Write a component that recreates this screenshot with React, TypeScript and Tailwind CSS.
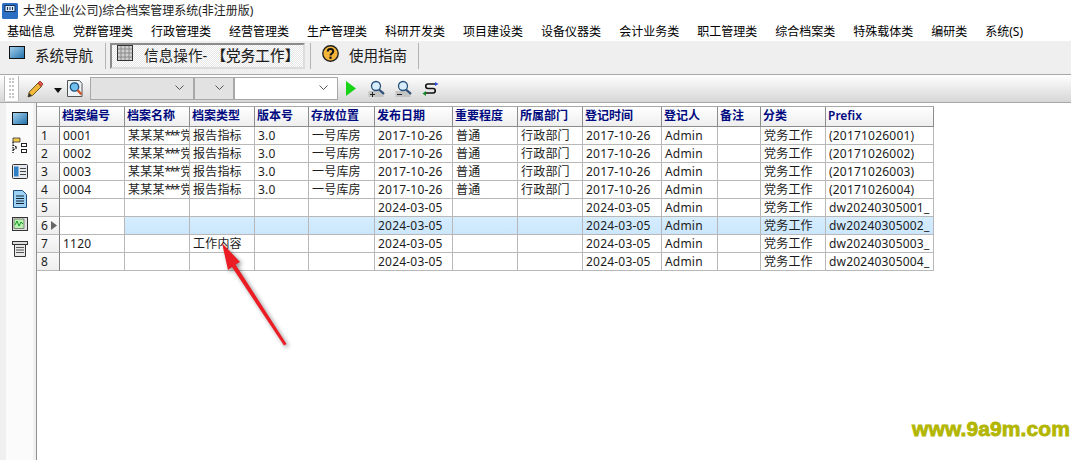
import React from "react";

const menus = ["基础信息","党群管理类","行政管理类","经营管理类","生产管理类","科研开发类","项目建设类","设备仪器类","会计业务类","职工管理类","综合档案类","特殊载体类","编研类","系统(S)"];
const headers = ["档案编号","档案名称","档案类型","版本号","存放位置","发布日期","重要程度","所属部门","登记时间","登记人","备注","分类","Prefix"];
const widths = "grid-cols-[23px_65px_65px_65px_54px_66px_78px_65px_65px_79px_56px_43px_65px_108px]";
const name = <>某某某<span className="tracking-[-2px]">***</span><span className="ml-[2px]">党</span></>;
const full = [name,"报告指标","3.0","一号库房"];
const rows: React.ReactNode[][] = [
  ["0001",...full,"2017-10-26","普通","行政部门","2017-10-26","Admin","","党务工作","(20171026001)"],
  ["0002",...full,"2017-10-26","普通","行政部门","2017-10-26","Admin","","党务工作","(20171026002)"],
  ["0003",...full,"2017-10-26","普通","行政部门","2017-10-26","Admin","","党务工作","(20171026003)"],
  ["0004",...full,"2017-10-26","普通","行政部门","2017-10-26","Admin","","党务工作","(20171026004)"],
  ["","","","","","2024-03-05","","","2024-03-05","Admin","","党务工作","dw20240305001_"],
  ["","","","","","2024-03-05","","","2024-03-05","Admin","","党务工作","dw20240305002_"],
  ["1120","","工作内容","","","2024-03-05","","","2024-03-05","Admin","","党务工作","dw20240305003_"],
  ["","","","","","2024-03-05","","","2024-03-05","Admin","","党务工作","dw20240305004_"],
];

function Monitor({ id }: { id: string }) {
  return (
    <svg className="block" width="16" height="13" viewBox="0 0 16 13">
      <defs>
        <linearGradient id={id} x1="0" y1="0" x2="1" y2="1">
          <stop offset="0" stopColor="#a8d4f0" />
          <stop offset="1" stopColor="#1f6ea8" />
        </linearGradient>
      </defs>
      <rect x="0.5" y="0.5" width="15" height="12" fill={`url(#${id})`} stroke="#111" />
    </svg>
  );
}
function Lens({ sign }: { sign: string }) {
  return <svg className="block" width="18" height="18" viewBox="0 0 18 18"><rect x="0.500" y="11" width="15" height="6" fill="#c4c4c4" /><circle cx="8" cy="6" r="4.500" fill="#d8ecfb" stroke="#25507a" strokeWidth="1.300" /><path d="M11 9.500l5 4.500" stroke="#2b4f78" strokeWidth="2.200" /><path d={sign === "+" ? "M2 14.500h5M4.500 12v5" : "M2 14.500h5"} stroke="#222" strokeWidth="1" /></svg>;
}
function Combo({ cls }: { cls: string }) {
  return <div className={`h-[23px] -mt-[1px] border border-[#a8a8a8] flex items-center justify-end pr-[9px] ${cls}`}><svg width="9" height="6" viewBox="0 0 9 6"><path d="M0.500 0.500l4 4 4-4" fill="none" stroke="#555" strokeWidth="1" /></svg></div>;
}

export default function App() {
  return (
    <div className="relative w-[1071px] h-[460px] overflow-hidden bg-white flex flex-col text-[12px] text-[#1c1c1c] font-['Noto_Sans','Noto_Sans_CJK_SC',sans-serif]">
      <div className="h-[22px] flex items-center pl-[2px] gap-[5px] shrink-0">
        <svg width="16" height="16" viewBox="0 0 16 16"><rect width="16" height="16" rx="1.500" fill="#2a6fc4" /><rect x="3" y="2.500" width="10" height="6" fill="#dbe9f8" stroke="#14315c" /><path d="M5.500 4v3M8 4v3M10.500 4v3" stroke="#14315c" /></svg>
        <span className="leading-none">大型企业(公司)综合档案管理系统(非注册版)</span>
      </div>
      <div className="h-[19px] flex items-center pl-[7px] gap-[18px] shrink-0 leading-none text-black">
        {menus.map((m) => <span key={m}>{m}</span>)}
      </div>
      <div className="h-[34px] bg-[#efefef] flex items-center pt-[2px] pb-[5px] shrink-0 text-[14.5px] leading-none border-b border-[#a8a8a8]">
        <div className="ml-[9px] w-[16px] -mt-[8px]"><Monitor id="navmon" /></div>
        <span className="ml-[10px] w-[58px] -mt-[2px] whitespace-nowrap">系统导航</span>
        <div className="ml-[12px] w-px h-[26px] bg-[#b4b4b4]" />
        <div className="ml-[4px] w-[195px] h-[26px] border-2 border-[#8a8a8a] border-b-[#dcdcdc] border-r-[#dcdcdc] flex items-center bg-[repeating-conic-gradient(#ffffff_0_25%,#e6e6e6_0_50%)] bg-[length:2px_2px]">
          <svg className="ml-[5px] -mt-[6px]" width="16" height="16" viewBox="0 0 16 16"><rect x="0.500" y="0.500" width="15" height="15" fill="#cfcfcf" stroke="#333" /><path d="M4 1v14M8 1v14M12 1v14M1 4h14M1 8h14M1 12h14" stroke="#8a8a8a" strokeWidth="1" /></svg>
          <span className="ml-[11px] -mt-[2px] whitespace-nowrap tracking-[0.15px]">信息操作-<span className="ml-[4px] [-webkit-text-stroke:0.2px_#1c1c1c]">【党务工作】</span></span>
        </div>
        <div className="ml-[5px] w-px h-[26px] bg-[#b4b4b4]" />
        <svg className="ml-[11px] -mt-[5px]" width="17" height="17" viewBox="0 0 17 17"><circle cx="8.500" cy="8.500" r="7.700" fill="#f5b53a" stroke="#222" strokeWidth="1.400" /><path d="M5.800 6.500c0-3.200 5.400-3.200 5.400 0 0 2-2.700 2-2.700 4" fill="none" stroke="#111" strokeWidth="2" /><rect x="7.400" y="11.600" width="2.200" height="2.200" fill="#111" /></svg>
        <span className="ml-[10px] w-[58px] -mt-[2px] whitespace-nowrap">使用指南</span>
        <div className="ml-[11px] w-px h-[26px] bg-[#b4b4b4]" />
      </div>
      <div className="h-[28px] shrink-0 flex items-center pl-[4px] border-b border-[#a8a8a8] bg-gradient-to-b from-white to-[#d6d6d6]">
        <div className="w-[15px] h-[25px] flex justify-center border-l border-r border-[#b8b8b8] bg-white">
          <div className="w-[5px] h-[20px] mt-[2px] border-l-2 border-r-2 border-dotted border-[#c8c8c8]" />
        </div>
        <svg className="ml-[8px]" width="17" height="18" viewBox="0 0 17 18"><path d="M1 17l1.200-5L11 3l3.500 3.500L5.500 15.500z" fill="#f1b93a" stroke="#5a4a1a" strokeWidth="0.900" /><path d="M11 3l2-2 3 3-2 2.500z" fill="#e2574a" stroke="#8a2a20" strokeWidth="0.800" /><path d="M1 17l1.200-4 2.800 2.800z" fill="#333" /></svg>
        <svg className="ml-[10px] mt-[4px]" width="8" height="5" viewBox="0 0 8 5"><path d="M0 0h8L4 5z" fill="#111" /></svg>
        <svg className="ml-[5px]" width="16" height="18" viewBox="0 0 16 18"><path d="M0.500 0.500h12l2.500 3v13h-14.500z" fill="#eef3f8" stroke="#555" /><circle cx="7.500" cy="7" r="4.200" fill="#6fc0ee" stroke="#1f4f7c" strokeWidth="1.300" /><path d="M10.500 10l4 4.500" stroke="#d2552a" strokeWidth="2.400" /></svg>
        <Combo cls="ml-[7px] w-[104px] bg-[#e2e2e2]" />
        <Combo cls="w-[40px] bg-[#e2e2e2]" />
        <Combo cls="w-[104px] bg-white" />
        <svg className="ml-[8px]" width="10" height="15" viewBox="0 0 10 15"><path d="M0 0l10 7.500L0 15z" fill="#18d418" /></svg>
        <div className="ml-[12px] h-[18px]"><Lens sign="+" /></div>
        <div className="ml-[9px] h-[18px]"><Lens sign="-" /></div>
        <svg className="ml-[9px]" width="17" height="16" viewBox="0 0 17 16"><path d="M14 3H6C3 3 3 7.500 6 7.500h5c3 0 3 4.500 0 4.500H3" fill="none" stroke="#111" strokeWidth="1.600" /><path d="M13 1l3.500 2L13 5z" fill="#2a4fe0" /><path d="M4 10v5L0.500 12.500z" fill="#168a2a" /></svg>
      </div>
      <div className="flex-1 flex min-h-0">
        <div className="w-[36px] shrink-0 bg-[#f0f0f0] pl-[6px] pr-[3px]">
          <div className="h-full bg-[#fbfbfb] flex flex-col items-center pt-[9px]">
            <div className="mb-[12px]"><Monitor id="sidemon" /></div>
            <svg className="block mb-[9px]" width="16" height="18" viewBox="0 0 16 18"><path d="M1 1h7v4H1z" fill="#f3c948" stroke="#333" strokeWidth="0.800" /><path d="M1 5v11M1 8l4 2.500-4 2.500" stroke="#111" strokeWidth="1.300" strokeDasharray="1.500 1" fill="none" /><rect x="9.500" y="6.500" width="5" height="3" fill="#fff" stroke="#222" /><rect x="9.500" y="12.500" width="5" height="3" fill="#fff" stroke="#222" /></svg>
            <svg className="block mb-[11px]" width="16" height="15" viewBox="0 0 16 15"><rect x="0.500" y="0.500" width="15" height="14" rx="1" fill="#e6e9ee" stroke="#333" /><rect x="2" y="2.500" width="4.500" height="10" fill="#2f7fc6" /><path d="M8 4.500h6M8 7.500h6M8 10.500h6" stroke="#444" /></svg>
            <svg className="block mb-[9px]" width="14" height="18" viewBox="0 0 14 18"><path d="M0.500 0.500h9l4 4v13h-13z" fill="#9dd2f5" stroke="#1c4d7c" /><path d="M3 6h8M3 8.500h8M3 11h8M3 13.500h8" stroke="#123" /></svg>
            <svg className="block mb-[10px]" width="16" height="14" viewBox="0 0 16 14"><rect x="0.500" y="0.500" width="15" height="13" fill="#e2e2e2" stroke="#333" /><rect x="2" y="2" width="10" height="9.500" fill="#b9f0b0" stroke="#444" strokeWidth="0.600" /><path d="M3 8l2-4 2 5 2-4 2 2" fill="none" stroke="#0a9a20" /></svg>
            <svg className="block" width="16" height="16" viewBox="0 0 16 16"><rect x="0.500" y="0.500" width="15" height="3" fill="#ddd" stroke="#333" /><path d="M2.500 3.500h11v12h-11z" fill="#e8e8e8" stroke="#333" /><path d="M4 6.500h8M4 9h8M4 11.500h8" stroke="#555" /></svg>
          </div>
        </div>
        <div className="flex-1 bg-white border-l border-[#909090] pt-[3px]">
          <div className={`grid w-[897px] border-t border-[#a8a8a8] ${widths}`}>
            <div className="h-[20px] bg-gradient-to-b from-white to-[#eeeeee] border-r border-b border-[#8c8c8c]" />
            {headers.map((h) => (
              <div key={h} className="h-[20px] pb-[2px] bg-gradient-to-b from-white to-[#eeeeee] border-r border-b border-[#8c8c8c] pl-[2px] flex items-center overflow-hidden whitespace-nowrap font-semibold text-[#000a80] leading-none">{h}</div>
            ))}
            {rows.map((r, i) => (
              <React.Fragment key={i}>
                <div className="h-[18px] bg-gradient-to-b from-[#fafafa] to-[#eeeeee] border-r border-b border-r-[#808080] border-b-[#b8b8b8] pl-[4px] flex items-center leading-none relative">
                  {i + 1}
                  {i === 5 && <svg className="absolute left-[14px] top-[4px]" width="6" height="9" viewBox="0 0 6 9"><path d="M0 0l6 4.500L0 9z" fill="#666" /></svg>}
                </div>
                {r.map((c, j) => (
                  <div key={j} className={`h-[18px] border-r border-b border-[#b8b8b8] pl-[3px] flex items-center overflow-hidden whitespace-nowrap leading-none tracking-[0.2px] ${i === 5 && j > 0 ? "bg-gradient-to-b from-[#d6edff] to-[#cbe6fc]" : "bg-white"}`}>{c}</div>
                ))}
              </React.Fragment>
            ))}
          </div>
        </div>
      </div>
      <svg className="absolute left-[215px] top-[238px] drop-shadow-[2px_2px_2px_rgba(0,0,0,0.45)]" width="80" height="112" viewBox="215 238 80 112">
        <path d="M222 243L240 262L235.500 264.500L286.500 344L284 345.500L232 267L228 270z" fill="#ec1c24" />
      </svg>
      <div className="absolute right-[1px] top-[417px] font-['Liberation_Sans',sans-serif] font-bold text-[21px] leading-[24px] tracking-[0.1px] [-webkit-text-stroke:0.8px_#b2b600] text-[#b2b600] whitespace-nowrap">www.9a9m.com</div>
    </div>
  );
}
